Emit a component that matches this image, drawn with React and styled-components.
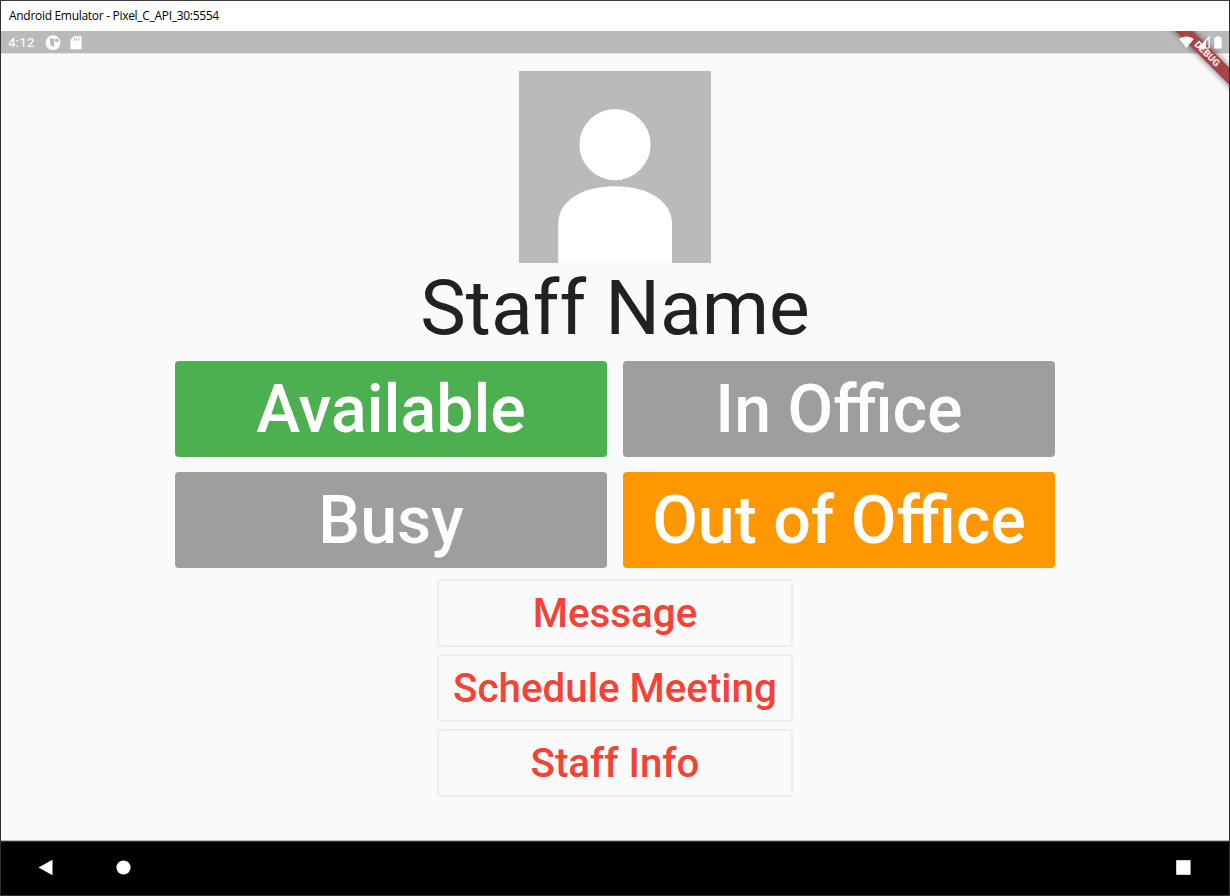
import React from "react";
import styled, { createGlobalStyle } from "styled-components";

const GlobalStyle = createGlobalStyle`
  * { box-sizing: border-box; }
  html, body { margin: 0; padding: 0; }
  body { width: 1230px; height: 896px; overflow: hidden; font-family: Roboto, sans-serif; }
  button { font-family: inherit; margin: 0; padding: 0; }
`;

const EmulatorWindow = styled.div`
  width: 1230px;
  height: 896px;
  display: flex;
  flex-direction: column;
  border: 1px solid #2f2f33;
  border-top-color: #3a3a41;
  background: #fafafa;
  overflow: hidden;
`;

const TitleBar = styled.header`
  flex: 0 0 30px;
  padding-left: 8px;
  background: #fff;
  color: #000;
  font: 12px/30px "Open Sans", "Noto Sans", sans-serif;
  letter-spacing: -0.3px;
  white-space: pre;
`;

const Device = styled.div`
  position: relative;
  flex: 1;
  display: flex;
  flex-direction: column;
  overflow: hidden;
`;

const StatusBar = styled.div`
  flex: 0 0 22px;
  display: flex;
  justify-content: space-between;
  align-items: center;
  padding: 1px 7px 0 7px;
  background: #bababa;
  box-shadow: 0 1px 0 #e4e4e4;
`;

const StatusGroup = styled.div`
  position: relative;
  z-index: 2;
  display: flex;
  align-items: center;
  gap: ${(p) => p.$gap}px;
`;

const Clock = styled.span`
  width: 27px;
  margin-right: 1px;
  color: #f7f7f7;
  font-size: 13.4px;
  font-weight: 500;
  line-height: 21px;
`;

const DebugCorner = styled.div`
  position: absolute;
  z-index: 1;
  top: 0;
  right: 0;
  width: 90px;
  height: 90px;
  overflow: hidden;
  pointer-events: none;
`;

const DebugRibbon = styled.div`
  position: absolute;
  top: 16.5px;
  right: -37.5px;
  width: 120px;
  height: 12px;
  transform: rotate(45deg);
  background: #a84444;
  box-shadow: 0 0 7px rgba(0, 0, 0, 0.6);
  color: #f3e6e6;
  font-size: 9.8px;
  font-weight: 900;
  line-height: 12px;
  text-align: center;
`;

const Content = styled.main`
  flex: 1;
  display: flex;
  flex-direction: column;
  align-items: center;
  padding-top: 18px;
`;

const Avatar = styled.svg`
  display: block;
  width: 192px;
  height: 192px;
`;

const StaffName = styled.h1`
  margin: 0;
  height: 90px;
  color: #212121;
  font-size: 76.8px;
  font-weight: 400;
  line-height: 90px;
  white-space: nowrap;
`;

const StatusGrid = styled.div`
  display: grid;
  grid-template-columns: 432px 432px;
  grid-auto-rows: 96px;
  gap: 15px 16px;
  margin-top: 8px;
`;

const StatusButton = styled.button`
  border: 0;
  border-radius: 4px;
  background: ${(p) => p.$color};
  color: #fff;
  font-size: 66.3px;
  font-weight: 500;
  line-height: 96px;
  white-space: nowrap;
`;

const ActionList = styled.div`
  display: flex;
  flex-direction: column;
  gap: 7px;
  margin-top: 11px;
`;

const ActionButton = styled.button`
  width: 356px;
  height: 68px;
  padding-top: 1px;
  border: 1px solid #ebebeb;
  border-radius: 4px;
  background: transparent;
  box-shadow: inset 0 0 0 1px #eeeeee;
  color: #f44336;
  font-size: 40.3px;
  font-weight: 500;
  line-height: 64px;
  white-space: nowrap;
`;

const NavBar = styled.nav`
  flex: 0 0 54px;
  display: flex;
  align-items: center;
  padding: 0 38px 1px 37px;
  border-top: 1px solid #303030;
  background: #000;
  box-shadow: 0 -1px 0 #b8b8b8;
`;

const NavIcon = styled.svg`
  display: block;
  width: 16px;
  height: 18px;
  fill: #fff;
  margin-left: ${(p) => p.$before || "0"};
`;

const statuses = [
  { label: "Available", color: "#4caf50" },
  { label: "In Office", color: "#9e9e9e" },
  { label: "Busy", color: "#9e9e9e" },
  { label: "Out of Office", color: "#ff9800" },
];

const actions = ["Message", "Schedule Meeting", "Staff Info"];

export default function App() {
  return (
    <>
      <GlobalStyle />
      <EmulatorWindow>
        <TitleBar>Android Emulator - Pixel_C_API_30:5554</TitleBar>
        <Device>
          <StatusBar>
            <StatusGroup $gap={9}>
              <Clock>4:12</Clock>
              <svg width="16" height="16" viewBox="0 0 16 16">
                <circle cx="8" cy="7.700" r="7.400" fill="#fff" />
                <path d="M5 3.400h4v8.600a4.600 4.600 0 0 1-4-4.400z" fill="#bababa" />
                <circle cx="11.700" cy="5.300" r="1.900" fill="#bababa" />
              </svg>
              <svg width="12" height="14" viewBox="0 0 12 14">
                <path d="M4 .3h6.500a1 1 0 0 1 1 1v11a1 1 0 0 1-1 1h-9a1 1 0 0 1-1-1V3.800z" fill="#fff" />
                <path d="M4.500 1.800v2.800M6.800 1.800v2.800M9.100 1.800v2.800" stroke="#bababa" strokeWidth="1" />
              </svg>
            </StatusGroup>
            <StatusGroup $gap={4}>
              <svg width="15" height="13" viewBox="0 0 15 13">
                <path d="M7.500 12 .2 3.100C4.300-.5 10.700-.5 14.800 3.100z" fill="#fff" />
              </svg>
              <svg width="12" height="13" viewBox="0 0 12 13">
                <path d="M11.200 1v11H.8z" fill="none" stroke="#fff" strokeWidth="1.200" />
                <path d="M8 4.500v7.800H.6z" fill="#fff" />
              </svg>
              <svg width="8" height="13" viewBox="0 0 8 13">
                <path d="M2.300.2h3.400v1.200H7a.7.700 0 0 1 .7.700v9.700a.7.700 0 0 1-.7.700H1a.7.700 0 0 1-.7-.7V2.100A.7.700 0 0 1 1 1.400h1.300z" fill="#fff" />
              </svg>
            </StatusGroup>
          </StatusBar>
          <DebugCorner>
            <DebugRibbon>DEBUG</DebugRibbon>
          </DebugCorner>
          <Content>
            <Avatar viewBox="0 0 192 192">
              <rect width="192" height="192" fill="#bababa" />
              <circle cx="96" cy="73.700" r="35.600" fill="#fff" />
              <path d="M39.200 192V153C39.200 130 63 115.300 96 115.300S153 130 153 153V192z" fill="#fff" />
            </Avatar>
            <StaffName>Staff Name</StaffName>
            <StatusGrid>
              {statuses.map((s) => (
                <StatusButton key={s.label} $color={s.color}>{s.label}</StatusButton>
              ))}
            </StatusGrid>
            <ActionList>
              {actions.map((label) => (
                <ActionButton key={label}>{label}</ActionButton>
              ))}
            </ActionList>
          </Content>
          <NavBar>
            <NavIcon viewBox="0 0.5 16 18"><path d="M.5 9 14.500 1.200V16.800z" /></NavIcon>
            <NavIcon $before="62px" viewBox="0 0.5 16 18"><circle cx="7.500" cy="9" r="7.100" /></NavIcon>
            <NavIcon $before="auto" viewBox="0 0.5 16 18"><rect x="1.200" y="1.700" width="14.400" height="14.600" /></NavIcon>
          </NavBar>
        </Device>
      </EmulatorWindow>
    </>
  );
}
